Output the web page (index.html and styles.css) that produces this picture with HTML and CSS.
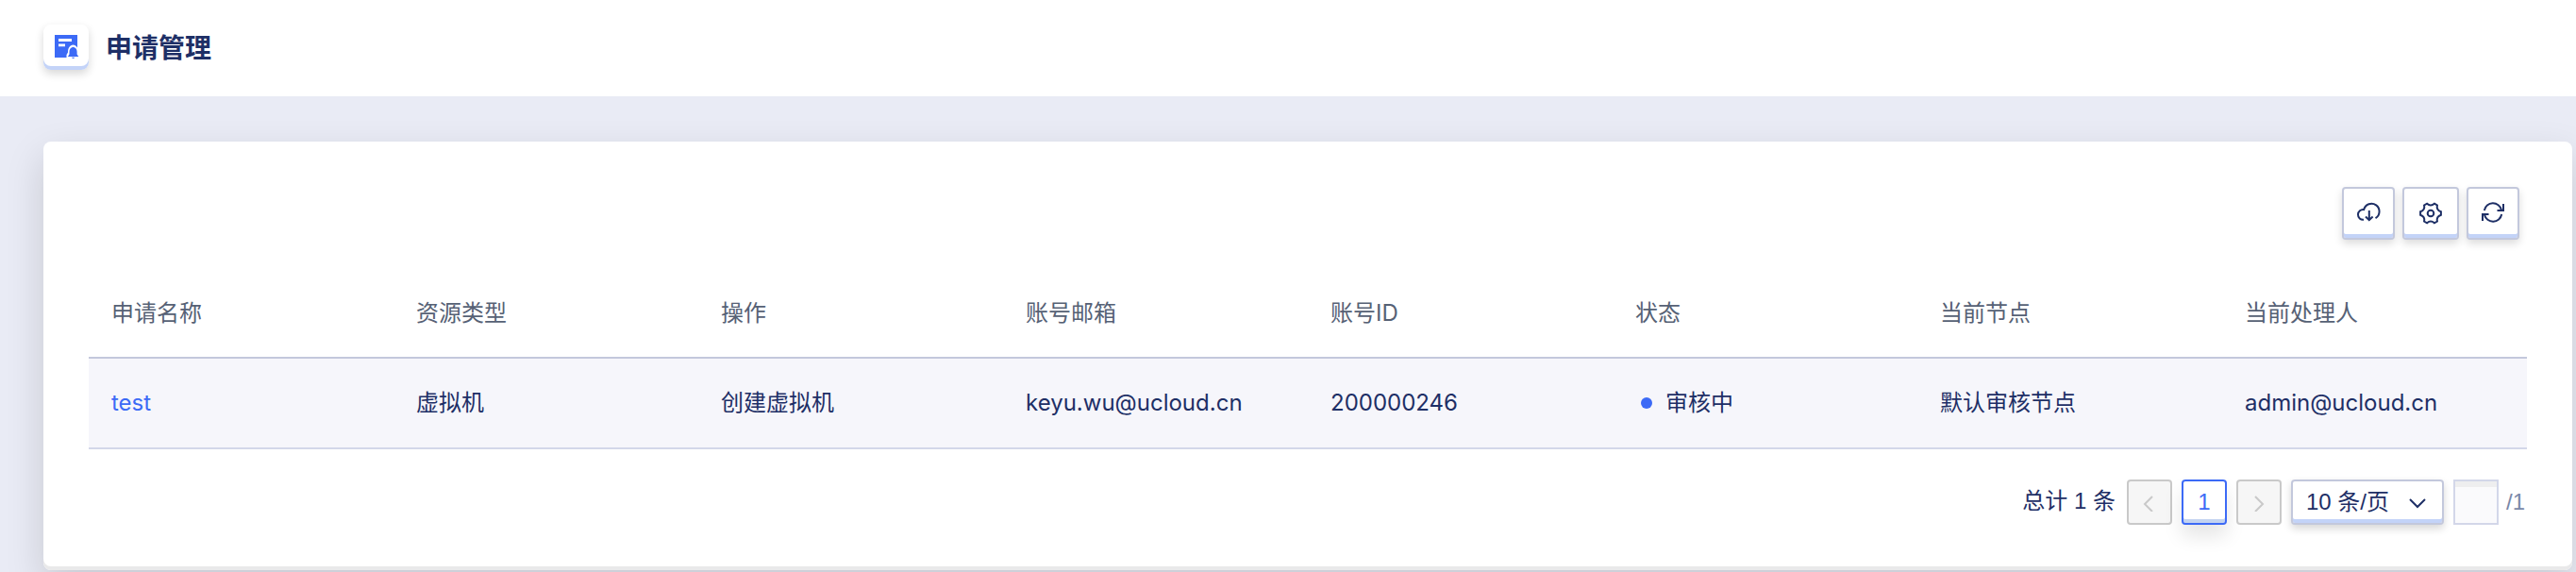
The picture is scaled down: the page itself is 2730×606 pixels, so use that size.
FILE: index.html
```html
<!DOCTYPE html>
<html lang="zh-CN">
<head>
<meta charset="utf-8">
<title>申请管理</title>
<link rel="stylesheet" href="styles.css">
</head>
<body>
<header class="page-header">
  <span class="page-icon">
    <svg viewBox="0 0 26 26" width="26" height="26" aria-hidden="true">
      <path fill="#3c6af6" d="M0 0H24V24H0Z"/>
      <path fill="#fff" d="M4 4H18V7H4ZM4 9.500H11V12.200H4Z"/>
      <path fill="#fff" d="M12.500 26V21L14 18.500C14 14 16 11.200 19.500 10.600C22.500 11 24 13 25 15.500H26V26Z"/>
      <path fill="#3c6af6" d="M19.500 12.800C22.300 13.500 23.600 15.300 23.600 17.800V20.500L25.300 23H13.900L15.500 20.500V17.800C15.500 15.300 16.800 13.500 19.500 12.800ZM18 23.800H21.200C21 25.300 18.200 25.300 18 23.800Z"/>
    </svg>
  </span>
  <h1 class="page-title">申请管理</h1>
</header>
<main class="page-body">
  <section class="card">
    <div class="toolbar">
      <button class="tool-btn" type="button" aria-label="下载">
        <svg viewBox="0 0 28 28" width="28" height="28" aria-hidden="true"><path d="M9 22.800A5.400 5.400 0 1 1 9.200 12.100A8.300 8.300 0 1 1 21.500 21.200M14.800 13V23M11 19.500L14.800 23.200L18.600 19.500"/></svg>
      </button>
      <button class="tool-btn tool-btn-wide" type="button" aria-label="设置">
        <svg viewBox="0 0 28 28" width="28" height="28" aria-hidden="true"><path d="M17.900 3.700L20.900 5.500Q19.800 10.600 24.900 12.300V15.700Q19.800 17.400 20.900 22.500L17.900 24.300Q14 20.700 10.100 24.300L7.100 22.500Q8.200 17.400 3.100 15.700V12.300Q8.200 10.600 7.100 5.500L10.100 3.700Q14 7.300 17.900 3.700Z"/><circle cx="14" cy="14" r="3.300"/></svg>
      </button>
      <button class="tool-btn" type="button" aria-label="刷新">
        <svg viewBox="0 0 28 28" width="28" height="28" aria-hidden="true"><path d="M4.800 13A9.300 9.300 0 0 1 23 12.500M25 6V13H18.500M23.200 17A9.300 9.300 0 0 1 5 17.500M3 24V17H9.500"/></svg>
      </button>
    </div>
    <table class="table">
      <thead>
        <tr><th>申请名称</th><th>资源类型</th><th>操作</th><th>账号邮箱</th><th>账号ID</th><th>状态</th><th>当前节点</th><th>当前处理人</th></tr>
      </thead>
      <tbody>
        <tr>
          <td><a class="link" href="#test">test</a></td>
          <td>虚拟机</td>
          <td>创建虚拟机</td>
          <td>keyu.wu@ucloud.cn</td>
          <td>200000246</td>
          <td><span class="status">审核中</span></td>
          <td>默认审核节点</td>
          <td>admin@ucloud.cn</td>
        </tr>
      </tbody>
    </table>
    <nav class="pagination" aria-label="分页">
      <span class="total">总计 1 条</span>
      <button class="page-btn" type="button" disabled aria-label="上一页">
        <svg viewBox="0 0 20 20" width="20" height="20" aria-hidden="true"><path d="M13 4L5 12L13 20"/></svg>
      </button>
      <button class="page-btn page-btn-active" type="button" aria-current="page">1</button>
      <button class="page-btn" type="button" disabled aria-label="下一页">
        <svg viewBox="0 0 20 20" width="20" height="20" aria-hidden="true"><path d="M6 4L14 12L6 20"/></svg>
      </button>
      <span class="select-wrap">
        <select class="page-size" aria-label="每页条数"><option>10 条/页</option></select>
        <svg class="select-arrow" viewBox="0 0 20 20" width="20" height="20" aria-hidden="true"><path d="M2 7L10 15L18 7"/></svg>
      </span>
      <label class="jump"><input class="jump-input" type="text" aria-label="跳转页码"><span class="jump-total">/1</span></label>
    </nav>
  </section>
</main>
</body>
</html>
```
FILE: styles.css
```css
* {
  box-sizing: border-box;
}

body {
  margin: 0;
  min-height: 100vh;
  background: #e9ebf5;
  color: #1e2f66;
  font-family: Inter, "Noto Sans CJK SC", sans-serif;
  font-size: 24px;
  line-height: 36px;
}

svg {
  display: block;
  flex: none;
}

button,
select,
input {
  margin: 0;
  padding: 0;
  font: inherit;
  color: inherit;
}

.page-header {
  position: relative;
  display: flex;
  align-items: center;
  gap: 18px;
  padding: 26px 46px 28px;
  background: #fff;
}

.page-icon {
  display: flex;
  width: 48px;
  height: 48px;
  padding: 11px 12px;
  border-radius: 8px;
  background: #fff;
  box-shadow: inset 0 -4px 0 #c3d3f8, 0 4px 10px rgba(0, 0, 0, 0.16);
}

.page-title {
  margin: 0;
  padding-top: 2px;
  font-size: 28px;
  font-weight: 700;
  line-height: 46px;
}

.page-body {
  padding: 48px 4px 2px 46px;
}

.card {
  padding: 48px;
  border-radius: 8px;
  background: #fff;
  box-shadow: inset 0 -4px 0 #e9e9ea, 0 16px 40px rgba(0, 0, 0, 0.15);
}

.toolbar {
  display: flex;
  justify-content: flex-end;
  gap: 8px;
  padding-right: 8px;
  margin-bottom: 30px;
}

.tool-btn {
  display: flex;
  align-items: center;
  justify-content: center;
  width: 56px;
  height: 56px;
  padding-bottom: 4px;
  border: 2px solid #c3c8dc;
  border-radius: 4px;
  background: #fff;
  box-shadow: inset 0 -4px 0 #c3d3f8, 0 4px 8px rgba(0, 0, 0, 0.14);
}

.tool-btn-wide {
  width: 60px;
  padding-top: 4px;
}

.tool-btn path,
.tool-btn circle {
  fill: none;
  stroke: #1e2f66;
  stroke-width: 2;
}

.table {
  width: 100%;
  table-layout: fixed;
  border-collapse: separate;
  border-spacing: 0;
}

.table th,
.table td {
  height: 96px;
  padding: 0 24px;
  text-align: left;
  font-weight: 400;
}

.table th {
  padding-top: 2px;
  border-bottom: 2px solid #c3c8dc;
  color: #566175;
}

.table td {
  border-bottom: 2px solid #d3d7e9;
  background: #f6f6fb;
}

.link {
  color: #3c6af6;
  text-decoration: none;
}

.status {
  display: flex;
  align-items: center;
  gap: 14px;
  padding-left: 6px;
}

.status::before {
  content: "";
  width: 12px;
  height: 12px;
  border-radius: 50%;
  background: #3c6af6;
}

.pagination {
  display: flex;
  align-items: center;
  justify-content: flex-end;
  gap: 10px;
  margin-top: 32px;
  font-family: "Liberation Sans", "Noto Sans CJK SC", sans-serif;
}

.total {
  padding: 0 2px 2px 0;
}

.page-btn {
  display: flex;
  align-items: center;
  justify-content: center;
  width: 48px;
  height: 48px;
  border: 2px solid #c9c9c9;
  border-radius: 4px;
  background: #f6f6f6;
}

.page-btn path {
  fill: none;
  stroke: #c9c9c9;
  stroke-width: 2;
}

.page-btn-active {
  border-color: #3c6af6;
  background: #fff;
  color: #3c6af6;
  box-shadow: inset 0 -4px 0 #c3d3f0, 0 12px 20px rgba(0, 0, 0, 0.1);
}

.select-wrap {
  display: grid;
  align-items: center;
}

.page-size,
.select-arrow {
  grid-area: 1 / 1;
}

.page-size {
  width: 162px;
  height: 48px;
  padding: 0 14px;
  border: 2px solid #c3c8dc;
  border-radius: 4px;
  appearance: none;
  background: #fff;
  box-shadow: inset 0 -4px 0 #c3d3f8, 0 4px 8px rgba(0, 0, 0, 0.16);
}

.select-arrow {
  justify-self: end;
  margin-right: 18px;
  pointer-events: none;
}

.select-arrow path {
  fill: none;
  stroke: #1e2f66;
  stroke-width: 2;
}

.jump {
  display: flex;
  align-items: center;
  gap: 8px;
  color: #7a88a8;
}

.jump-total {
  min-width: 22px;
}

.jump-input {
  width: 48px;
  height: 48px;
  border: 2px solid #d3d7e9;
  background: #fafafc;
  box-shadow: inset 0 6px 0 #eeeeef;
}
```
